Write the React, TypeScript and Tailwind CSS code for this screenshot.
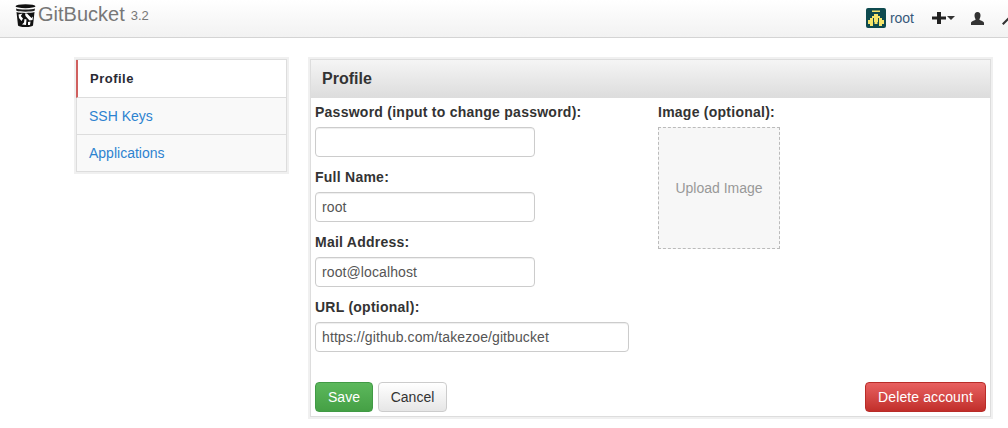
const sans = "font-['Liberation_Sans',Arial,sans-serif]";

function BucketLogo() {
  return (
    <svg width="21" height="23" viewBox="0 0 21 23" className="block">
      <ellipse cx="10.500" cy="2.200" rx="10" ry="2" fill="#111" />
      <path d="M1 4.500C4 5.800 17 5.800 20 4.500L19.600 6.800C16 8 5 8 1.400 6.800Z" fill="#222" />
      <path d="M1.500 8C5 9.200 16 9.200 19.500 8L18 21.500c-.3.900-3 1.500-7.500 1.500S3.300 22.400 3 21.500Z" fill="#111" />
      <path d="M3.500 10.500 7.500 9.500 5.800 12 8 14.500 6.500 17 4 14Z" fill="#fff" />
      <path d="M10 9.500 12 9.500 16.500 14 18 12.500 17.500 16 14.500 16.500 10.500 12Z" fill="#fff" />
      <path d="M9.500 15 11.500 15.500 11 21 7 20.500 9 18.500Z" fill="#fff" />
      <path d="M13 18 15.500 17.500 15 21 13 21Z" fill="#fff" />
    </svg>
  );
}

function Avatar() {
  return (
    <svg width="20" height="20" viewBox="0 0 20 20" className="block">
      <rect width="20" height="20" rx="2" fill="#0e4a4f" />
      <g fill="#f4e46a">
        <rect x="6" y="2.500" width="8" height="1.500" />
        <rect x="8" y="6" width="4" height="2" />
        <rect x="6" y="8" width="8" height="2" />
        <rect x="4" y="10" width="12" height="4" />
        <rect x="2" y="12" width="2" height="4" />
        <rect x="16" y="12" width="2" height="4" />
        <rect x="4" y="14" width="3" height="4" />
        <rect x="8.500" y="14" width="3" height="2" />
        <rect x="13" y="14" width="3" height="4" />
      </g>
      <g fill="#0e4a4f">
        <rect x="7" y="10" width="1" height="4" />
        <rect x="12" y="10" width="1" height="4" />
      </g>
    </svg>
  );
}

function Field({ label, value, wide }: { label: string; value: string; wide?: boolean }) {
  return (
    <div className="mb-[13px] last:mb-0">
      <label className="block h-[15px] text-[14px] leading-[15px] font-bold tracking-[0.25px] text-[#333] mb-[7px]">{label}</label>
      <input
        readOnly
        value={value}
        className={`block h-[30px] rounded-[4px] border border-[#ccc] bg-white px-[6px] text-[14px] tracking-[0.1px] text-[#555] outline-none shadow-[inset_0_1px_1px_rgba(0,0,0,0.07)] ${
          wide ? "w-[314px]" : "w-[220px]"
        }`}
      />
    </div>
  );
}

export default function App() {
  return (
    <div className={`${sans} w-[1008px] h-[428px] overflow-hidden bg-white text-[14px] text-[#333]`}>
      {/* Header */}
      <div className="flex h-[38px] items-start border-b border-[#d4d4d4] bg-gradient-to-b from-white to-[#f2f2f2] pl-[15px]">
        <div className="mt-[4px]">
          <BucketLogo />
        </div>
        <span className="ml-[2px] text-[20px] leading-[24px] mt-[2px] text-[#777]">GitBucket</span>
        <span className="ml-[6px] text-[13px] leading-[24px] mt-[4px] text-[#777]">3.2</span>
        <div className="ml-auto mr-[-8px] flex shrink-0 items-center pt-[8px]">
          <Avatar />
          <span className="ml-[4px] text-[14px] leading-[20px] text-[#36587a]">root</span>
          <svg width="14" height="14" viewBox="0 0 14 14" className="ml-[18px] block">
            <path d="M5 1h4v4.500h5v3H9V13H5V8.500H0v-3h5Z" fill="#222" />
          </svg>
          <svg width="8" height="4" viewBox="0 0 8 4" className="ml-[1px] block">
            <path d="M0 0h8L4 4Z" fill="#333" />
          </svg>
          <svg width="13" height="13" viewBox="0 0 13 13" className="ml-[16px] block">
            <path d="M6.500 0C8.500 0 9.500 1.500 9.500 3.500S8.500 7 8.300 7.500c0 .8 4.700 1.500 4.700 3.500v2H0v-2c0-2 4.700-2.700 4.700-3.500C4.500 7 3.500 5.500 3.500 3.500S4.500 0 6.500 0Z" fill="#333" />
          </svg>
          <svg width="14" height="14" viewBox="0 0 14 14" className="ml-[18px] block">
            <path d="M0 12.500 7 5.500C6.500 3 8.500 0.500 11.500 1L9.500 3 11 4.500 13 2.500C13.500 5.500 11 7.500 8.500 7L1.500 14Z" fill="#333" />
          </svg>
        </div>
      </div>

      {/* Main */}
      <div className="flex items-start pl-[76px] pt-[21px]">
        {/* Sidebar */}
        <div className="w-[211px] border border-[#ddd] bg-[#f9f9f9] shadow-[0_0_0_2px_#f0f0f0]">
          <div className="-ml-px flex h-[38px] items-center border-b border-l-2 border-b-[#ddd] border-l-[#d0605f] bg-white pl-[12px] pt-px font-bold text-[13px] tracking-[0.5px] text-[#2a2a33]">
            Profile
          </div>
          <div className="flex h-[37px] items-center border-b border-[#ddd] pl-[12px] text-[#2d83d0]">SSH Keys</div>
          <div className="flex h-[36px] items-center pl-[12px] text-[#2d83d0]">Applications</div>
        </div>

        {/* Panel */}
        <div className="ml-[23px] flex h-[358px] w-[681px] flex-col border border-[#ddd] shadow-[0_0_0_2px_#f0f0f0]">
          <div className="flex h-[38px] shrink-0 items-center border-b border-[#ddd] bg-gradient-to-b from-[#f5f5f5] to-[#dddddd] pl-[11px] text-[16px] font-bold text-[#333]">
            Profile
          </div>
          <div className="flex flex-1 flex-col px-[4px] pt-[7px] pb-[4px]">
            <div className="flex">
              <div className="w-[343px]">
                <Field label="Password (input to change password):" value="" />
                <Field label="Full Name:" value="root" />
                <Field label="Mail Address:" value="root@localhost" />
                <Field label="URL (optional):" value="https://github.com/takezoe/gitbucket" wide />
              </div>
              <div>
                <div className="h-[15px] text-[14px] leading-[15px] font-bold tracking-[0.25px] text-[#333] mb-[7px]">Image (optional):</div>
                <div className="flex h-[122px] w-[122px] items-center justify-center border border-dashed border-[#bbb] bg-[#f7f7f7] text-[14px] text-[#999]">
                  Upload Image
                </div>
              </div>
            </div>
            <div className="mt-auto flex items-center">
              <button className="h-[30px] w-[58px] rounded-[4px] border border-[#419a45] bg-gradient-to-b from-[#5cb85c] to-[#45a045] text-white">
                Save
              </button>
              <button className="ml-[5px] h-[30px] w-[69px] rounded-[4px] border border-[#ccc] bg-gradient-to-b from-white to-[#e6e6e6] text-[#333]">
                Cancel
              </button>
              <button className="ml-auto h-[30px] w-[121px] rounded-[4px] border border-[#b92c28] bg-gradient-to-b from-[#e86060] to-[#c12e2a] tracking-[0.1px] text-white">
                Delete account
              </button>
            </div>
          </div>
        </div>
      </div>
    </div>
  );
}
